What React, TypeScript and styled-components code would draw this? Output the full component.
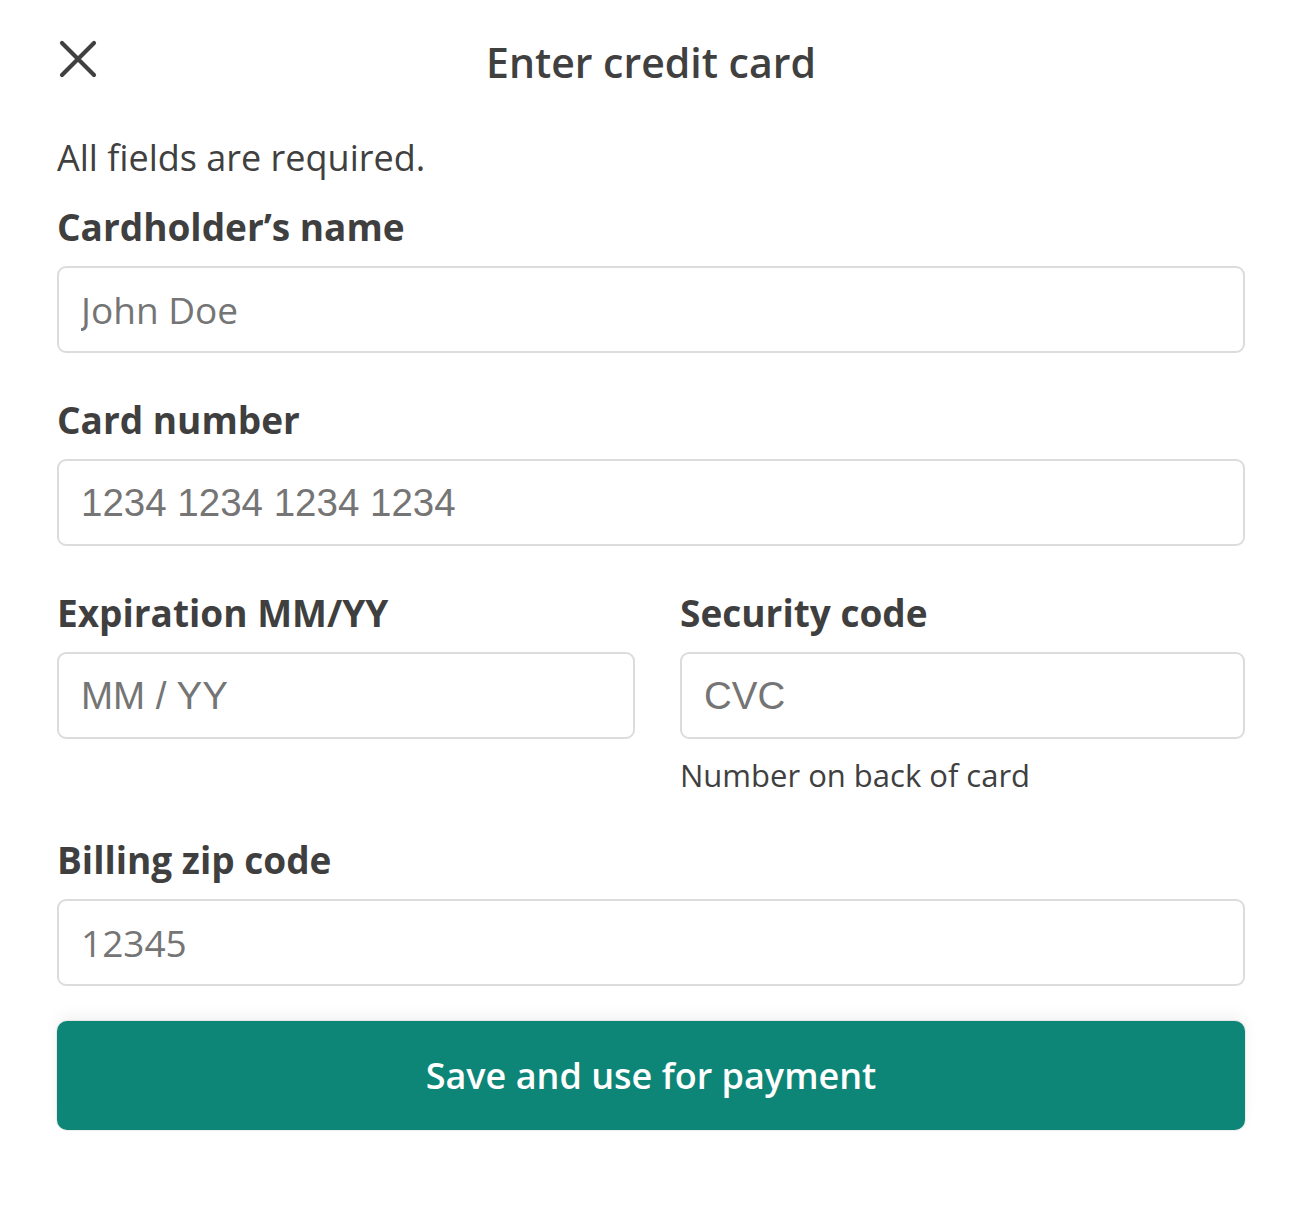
import React from "react";
import styled, { createGlobalStyle } from "styled-components";

const GlobalStyle = createGlobalStyle`
  html, body {
    margin: 0;
    padding: 0;
    background: #ffffff;
  }
  body {
    font-family: "Open Sans", "Noto Sans", sans-serif;
    color: #404040;
  }
  * { box-sizing: border-box; }
`;

const Page = styled.div`
  padding: 38px 61px 60px 57px;
  display: flex;
  flex-direction: column;
`;

const Header = styled.header`
  display: grid;
  grid-template-columns: 1fr auto 1fr;
  align-items: start;
  height: 48px;
`;

const CloseButton = styled.button`
  justify-self: start;
  width: 40px;
  height: 40px;
  margin: 1px 0 0 1px;
  padding: 0;
  border: none;
  background: transparent;
  color: #404040;
  cursor: pointer;
  display: flex;
`;

const Title = styled.h1`
  margin: 0;
  font-size: 41px;
  line-height: 48px;
  font-weight: 600;
  color: #404040;
  white-space: nowrap;
`;

const Intro = styled.p`
  margin: 50px 0 0;
  font-size: 36px;
  line-height: 44px;
  font-weight: 400;
  color: #404040;
`;

const Form = styled.form`
  margin-top: 28px;
  display: flex;
  flex-direction: column;
  gap: 48px;
`;

const Row = styled.div`
  display: grid;
  grid-template-columns: 578fr 565fr;
  column-gap: 45px;
  align-items: start;
`;

const Field = styled.div`
  display: flex;
  flex-direction: column;
`;

const Label = styled.label`
  font-size: 37px;
  line-height: 38px;
  font-weight: 700;
  color: #3f3f3f;
  margin-bottom: 20px;
  white-space: nowrap;
`;

const Input = styled.input<{ $stripe?: boolean }>`
  width: 100%;
  height: 87px;
  border: 2px solid #dcdcdc;
  border-radius: 9px;
  padding: 0 22px;
  background: #fff;
  outline: none;
  color: #404040;
  font-family: ${(p) =>
    p.$stripe ? '"Liberation Sans", Arial, sans-serif' : '"Open Sans", "Noto Sans", sans-serif'};
  font-size: ${(p) => (p.$stripe ? "38.5px" : "37px")};
  &::placeholder {
    color: #757575;
    opacity: 1;
  }
`;

const Helper = styled.div`
  margin-top: 18px;
  font-size: 31px;
  line-height: 36px;
  color: #404040;
`;

const SubmitButton = styled.button`
  margin-top: 35px;
  height: 109px;
  width: 100%;
  border: none;
  border-radius: 10px;
  background: #0d8677;
  color: #ffffff;
  font-family: "Open Sans", "Noto Sans", sans-serif;
  font-size: 36px;
  font-weight: 600;
  cursor: pointer;
  box-shadow: 0 -6px 14px rgba(0, 0, 0, 0.05), 0 0 0 1px rgba(0, 0, 0, 0.06);
`;

const CloseIcon = () => (
  <svg width="40" height="40" viewBox="0 0 40 40" fill="none">
    <path
      d="M4 4 L36 36 M36 4 L4 36"
      stroke="currentColor"
      strokeWidth="4.2"
      strokeLinecap="round"
    />
  </svg>
);

export default function App() {
  return (
    <>
      <GlobalStyle />
      <Page>
        <Header>
          <CloseButton type="button" aria-label="Close">
            <CloseIcon />
          </CloseButton>
          <Title>Enter credit card</Title>
          <span />
        </Header>
        <Intro>All fields are required.</Intro>
        <Form onSubmit={(e) => e.preventDefault()}>
          <Field>
            <Label htmlFor="name">Cardholder’s name</Label>
            <Input id="name" placeholder="John Doe" />
          </Field>
          <Field>
            <Label htmlFor="number">Card number</Label>
            <Input id="number" $stripe placeholder="1234 1234 1234 1234" />
          </Field>
          <Row>
            <Field>
              <Label htmlFor="exp">Expiration MM/YY</Label>
              <Input id="exp" $stripe placeholder="MM / YY" />
            </Field>
            <Field>
              <Label htmlFor="cvc">Security code</Label>
              <Input id="cvc" $stripe placeholder="CVC" />
              <Helper>Number on back of card</Helper>
            </Field>
          </Row>
          <Field>
            <Label htmlFor="zip">Billing zip code</Label>
            <Input id="zip" placeholder="12345" />
          </Field>
        </Form>
        <SubmitButton type="submit">Save and use for payment</SubmitButton>
      </Page>
    </>
  );
}
